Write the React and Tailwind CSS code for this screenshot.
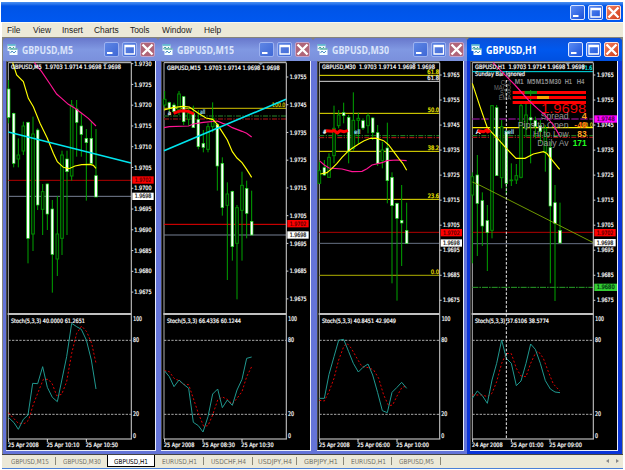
import clsx from 'clsx';

const MENU = [
  ['File', 'w-[26px]'],
  ['View', 'w-[29px]'],
  ['Insert', 'w-[32px]'],
  ['Charts', 'w-[36px]'],
  ['Tools', 'w-[32px]'],
  ['Window', 'w-[42px]'],
  ['Help', 'w-[30px]'],
];

const TABS = [
  ['GBPUSD,M15', 'w-[53px]', 38],
  ['GBPUSD,M30', 'w-[51px]', 38],
  ['GBPUSD,H1', 'w-[48px]', 34],
  ['EURUSD,H1', 'w-[49px]', 35],
  ['USDCHF,H4', 'w-[49px]', 35],
  ['USDJPY,H4', 'w-[44px]', 34],
  ['GBPJPY,H1', 'w-[47px]', 34],
  ['EURUSD,H1', 'w-[48px]', 35],
  ['GBPUSD,M5', 'w-[49px]', 35],
];

// candles: [x, high, low, body top, body bottom, filled]
const CHARTS = [
  {
    title: 'GBPUSD,M5',
    titleWidth: 51,
    width: 'w-[155px]',
    pad: 'pl-[3px] pr-[2px]',
    view: [18, 149],
    left: 25,
    axis: 394,
    header: [33, 330, 22],
    marker: 316,
    scale: { x: 403, w: 52, first: 11, step: 62.3, top: 19730, by: 5, count: 12 },
    dates: [[24, 92, '25 Apr 2008'], [140, 98, '25 Apr 10:10'], [257, 97, '25 Apr 10:50']],
    stoch: 'Stoch(5,3,3) 40.0000 61.2651',
    candles: [
      [26, 60, 190, 87, 172, 1], [41, 158, 322, 160, 310, 1], [55, 235, 322, 285, 297, 0],
      [70, 185, 285, 198, 273, 0], [84, 185, 610, 187, 535, 1], [99, 170, 573, 222, 522, 0],
      [113, 205, 450, 210, 435, 1], [128, 372, 525, 395, 448, 0], [142, 370, 510, 372, 462, 1],
      [157, 420, 698, 447, 583, 1], [172, 408, 648, 522, 597, 0], [186, 272, 585, 285, 535, 0],
      [201, 272, 525, 297, 335, 1], [215, 120, 362, 135, 348, 0], [230, 120, 290, 147, 187, 1],
      [244, 160, 290, 198, 223, 1], [259, 207, 422, 235, 248, 1], [274, 183, 315, 235, 310, 1],
      [288, 207, 411, 347, 411, 1],
    ],
    hlines: [[361, '#b00000'], [409, '#778094']],
    lines: [
      ['#ffff00', '38,8 50,45 70,65 85,115 100,140 120,190 142,235 160,280 172,305 190,322 207,326 225,318 245,314 270,313 280,316 288,325'],
      ['#ff1493', '103,8 125,35 150,72 170,102 185,115 205,133 225,145 245,160 265,175 288,198'],
      ['#00e5ee', '25,216 393,309', 4.5],
    ],
    tags: [[397, 360, '1.9702', '#ff0000', '#500'], [397, 409, '1.9698', '#ffffff', '#222']],
    labels: [],
    main: '25,322 42,338 55,358 70,328 84,315 98,220 113,221 128,170 142,232 157,262 172,275 200,140 215,40 230,50 244,58 259,90 274,150 288,237',
    signal: '25,308 55,340 75,340 86,330 100,283 115,245 130,208 145,208 157,222 170,257 185,253 200,215 215,130 230,70 245,48 260,65 275,100 288,160',
  },
  {
    title: 'GBPUSD,M15',
    titleWidth: 57,
    width: 'w-[155px]',
    pad: 'pl-[3px] pr-[2px]',
    view: [15, 149],
    left: 24,
    axis: 391,
    header: [33, 338, 23],
    marker: 314,
    scale: { x: 401, w: 51, first: 51, step: 83.2, top: 19755, by: 10, count: 9 },
    dates: [[24, 91, '25 Apr 2008'], [139, 98, '25 Apr 08:30'], [256, 97, '25 Apr 10:30']],
    stoch: 'Stoch(5,3,3) 66.4336 60.1244',
    candles: [
      [26, 93, 142, 118, 135, 0], [40, 125, 155, 128, 145, 1], [54, 128, 160, 135, 155, 1],
      [69, 93, 165, 102, 150, 0], [83, 108, 195, 110, 185, 1], [98, 145, 197, 160, 178, 0],
      [112, 137, 203, 160, 203, 1], [127, 150, 268, 178, 260, 1], [142, 210, 277, 250, 262, 1],
      [156, 190, 277, 200, 268, 0], [170, 127, 217, 175, 200, 0], [184, 190, 392, 193, 318, 1],
      [199, 292, 467, 310, 443, 1], [214, 367, 660, 402, 436, 0], [229, 392, 602, 394, 560, 1],
      [243, 435, 718, 443, 550, 0], [258, 335, 602, 376, 451, 0], [272, 362, 535, 385, 460, 1],
      [287, 392, 525, 484, 525, 1],
    ],
    hlines: [
      [145, '#a89c00', 4], [168, '#1d5c1d', 4, '15 4 4 4'], [177, '#7a1010', 4, '15 4 4 4'],
      [493, '#f00000'], [525, '#778094'],
    ],
    lines: [
      ['#ff1493', '24,203 40,200 98,198 112,192 142,187 184,183 200,190 214,194 229,203 258,214 272,220 287,231'],
      ['#ffff00', '24,150 50,143 80,139 100,141 127,160 150,174 170,178 184,193 200,218 214,240 229,275 243,294 258,308 272,328 287,352'],
      ['#00e5ee', '24,272 390,118', 5],
    ],
    scribble: 'M53 160 L68 154 L82 152 L97 154 L114 162',
    tags: [[394, 491, '1.9702', '#ff0000', '#500'], [394, 525, '1.9698', '#ffffff', '#222']],
    labels: [
      [348, 134, 40, '100.0', '#d8d000'],
      [35, 158, 10, 'a', '#fff'],
      [132, 157, 16, 'all', '#9de'],
    ],
    main: '25,182 40,200 54,230 69,210 83,223 98,235 112,337 127,347 141,366 156,320 170,252 185,237 199,293 214,270 229,286 243,240 258,208 272,145 287,141',
    signal: '25,182 40,185 54,205 69,212 83,223 98,224 112,265 127,310 143,349 156,347 170,315 185,270 199,261 214,268 229,282 243,265 258,245 272,200 287,170',
  },
  {
    title: 'GBPUSD,M30',
    titleWidth: 57,
    width: 'w-[154px]',
    pad: 'pl-[4px] pr-[3px]',
    view: [15, 146],
    left: 22,
    axis: 383,
    header: [30, 339, 21],
    marker: 306,
    scale: { x: 393, w: 50, first: 45, step: 75.1, top: 19765, by: 10, count: 10 },
    dates: [[21, 92, '25 Apr 2008'], [136, 98, '25 Apr 06:00'], [253, 98, '25 Apr 10:00']],
    stoch: 'Stoch(5,3,3) 40.8451 42.9049',
    candles: [
      [22, 300, 372, 332, 370, 0], [37, 300, 348, 323, 345, 1], [51, 280, 353, 292, 352, 0],
      [66, 137, 310, 205, 287, 0], [80, 150, 205, 165, 197, 0], [95, 128, 190, 158, 167, 1],
      [110, 165, 310, 172, 275, 1], [124, 97, 272, 181, 265, 0], [139, 158, 252, 175, 181, 0],
      [153, 175, 210, 182, 204, 1], [168, 160, 220, 167, 197, 0], [182, 172, 240, 174, 218, 1],
      [197, 195, 318, 218, 310, 1], [211, 245, 325, 270, 302, 0], [226, 188, 430, 264, 362, 1],
      [240, 337, 670, 352, 437, 1], [255, 428, 722, 430, 475, 1], [269, 375, 618, 481, 489, 1],
      [284, 428, 550, 511, 550, 1],
    ],
    hlines: [
      [46, '#f0e800'], [64, '#d8d8d8'], [160, '#f0e800'], [274, '#f0e800'], [418, '#f0e800'],
      [646, '#8c8c00', 4], [227, '#229022', 3, '15 4 4 4'], [233, '#c01818', 3, '15 4 4 4'],
      [517, '#b00000'], [550, '#667084'],
    ],
    lines: [
      ['#ff1493', '22,302 37,315 51,324 90,327 120,335 150,334 165,326 180,315 210,308 225,302 255,300 284,302'],
      ['#ffff00', '25,342 45,338 60,325 75,310 90,292 110,272 125,262 140,252 155,243 175,235 195,235 215,242 230,255 245,275 260,295 272,310 284,331'],
    ],
    scribble: 'M42 212 L60 214 L66 211 L76 219 L84 212 L97 215 L108 212',
    tags: [[386, 518, '1.9702', '#ff0000', '#500'], [386, 549, '1.9698', '#ffffff', '#222']],
    labels: [
      [346, 37, 35, '61.8', '#f0e800'], [346, 55, 35, '61.8', '#eee'], [347, 150, 34, '50.0', '#f0e800'],
      [347, 264, 34, '38.2', '#f0e800'], [347, 408, 34, '23.6', '#f0e800'], [356, 637, 25, '0.0', '#e0d800'],
      [32, 216, 12, '#', '#fff'], [127, 215, 18, 'ell', '#9de'],
    ],
    main: '22,265 37,265 51,193 66,140 80,91 95,88 110,125 124,160 139,186 153,172 168,162 182,195 197,248 211,302 226,308 240,247 255,232 269,217 284,235',
    signal: '22,271 37,273 51,245 66,205 80,150 95,110 105,100 118,115 135,145 150,170 170,173 185,180 200,205 215,255 230,287 242,285 255,258 270,232 284,228',
  },
  {
    title: 'GBPUSD,H1',
    titleWidth: 51,
    active: true,
    width: 'w-[155px]',
    pad: 'pl-[3px] pr-[4px]',
    view: [15, 147],
    left: 22,
    axis: 385,
    header: [30, 329, 21],
    marker: 308,
    scale: { x: 396, w: 50, first: 45, step: 75.1, top: 19765, by: 10, count: 10 },
    dates: [[21, 92, '24 Apr 2008'], [137, 98, '25 Apr 01:00'], [253, 98, '25 Apr 09:00']],
    stoch: 'Stoch(5,3,3) 37.6106 38.5774',
    candles: [
      [22, 337, 610, 350, 405, 0], [37, 285, 588, 345, 430, 1], [52, 397, 558, 422, 498, 1],
      [67, 435, 633, 482, 518, 1], [81, 135, 535, 137, 511, 0], [95, 135, 347, 143, 347, 1],
      [110, 180, 385, 200, 353, 0], [124, 210, 405, 215, 370, 1], [139, 310, 378, 360, 361, 0],
      [154, 312, 372, 347, 360, 0], [168, 130, 355, 137, 352, 0], [183, 125, 232, 165, 205, 0],
      [197, 90, 310, 173, 180, 1], [211, 170, 235, 182, 200, 1], [226, 180, 250, 197, 215, 1],
      [241, 195, 335, 205, 275, 0], [256, 245, 670, 263, 438, 1], [270, 375, 723, 428, 490, 1],
      [285, 428, 551, 511, 549, 1],
    ],
    hlines: [
      [35, '#00e5ee'], [177, '#78107c', 4, '22 5'], [203, '#fff000', 4], [227, '#229022', 3, '15 4 4 4'],
      [232, '#c01818', 3, '15 4 4 4'], [517, '#b00000'], [551, '#667084'], [682, '#28a028', 3, '18 3 5 3'],
    ],
    lines: [
      ['#86b800', '22,366 45,376 385,548', 2.5],
      ['#ff1493', '84,8 110,35 150,75 190,120 220,148 240,165 265,195 284,227'],
      ['#ffff00', '22,70 45,140 67,203 100,238 124,265 153,295 180,295 205,282 235,275 245,280 265,305 284,328'],
    ],
    cursor: 124,
    scribble: 'M38 212 L56 215 L66 209 L68 216 L76 212',
    tags: [
      [388, 177, '1.9748', '#ff00ff', '#404', 68], [388, 518, '1.9702', '#ff0000', '#500'],
      [388, 548, '1.9698', '#ffffff', '#222'], [388, 682, '1.9680', '#32cd32', '#031', 68],
    ],
    labels: [
      [350, 25, 32, '71.6', '#00e5ee'], [342, 195, 41, '100.0', '#d8d000'], [30, 41, 150, 'Sunday Bar ignored', '#eee'],
      [32, 216, 14, 'A', '#fff'], [119, 215, 28, 'sell', '#9de'],
    ],
    panel: true,
    main: '22,265 37,243 52,257 67,280 81,210 95,160 110,90 124,145 139,160 154,227 168,213 183,160 197,102 211,118 226,160 241,212 256,237 270,246 285,248',
    signal: '22,255 52,255 67,260 81,250 95,215 110,160 124,130 139,131 154,175 168,198 183,200 197,160 211,130 220,124 235,145 250,185 265,222 285,243',
  },
];

function Label({ x, y, w, size = 19, fill = '#f4f4f4', bold, children }) {
  return (
    <text
      x={x}
      y={y + size * 0.36}
      fontSize={size}
      fill={fill}
      stroke={size < 20 ? fill : 'none'}
      strokeWidth="0.7"
      fontWeight={bold ? 700 : 400}
      textLength={w}
      lengthAdjust="spacingAndGlyphs"
      xmlSpace="preserve"
    >
      {children}
    </text>
  );
}

function Candle({ data }) {
  const [x, high, low, top, bottom, filled] = data;
  return (
    <g>
      <path d={`M${x} ${high}V${low}`} stroke="#00a400" strokeWidth="3" />
      <rect
        x={x - 4}
        y={top}
        width="8"
        height={Math.max(bottom - top, 2)}
        fill={filled ? '#ffffff' : '#001800'}
        stroke={filled ? '#20d820' : '#008c00'}
        strokeWidth={filled ? 2 : 3}
      />
    </g>
  );
}

function InfoPanel() {
  return (
    <g fontFamily='"Liberation Sans", Arial, sans-serif'>
      <Label x={107} y={67} w={31} size={20} fill="#707070">CCI</Label>
      <Label x={87} y={82} w={51} size={20} fill="#707070">MACD</Label>
      <Label x={105} y={97} w={33} size={20} fill="#707070">STR</Label>
      <Label x={101} y={112} w={37} size={20} fill="#707070">EMA</Label>
      {[['M1', 149, 27], ['M5', 186, 25], ['M15', 212, 38], ['M30', 252, 37], ['H1', 299, 22], ['H4', 335, 23]].map(([t, x, w]) => (
        <Label key={t} x={x} y={66} w={w} size={20} fill="#8c8c8c" bold>{t}</Label>
      ))}
      <rect x="143" y="93" width="220" height="9" fill="#ff0000" />
      <rect x="179" y="93" width="37" height="9" fill="#109010" />
      <rect x="143" y="108" width="220" height="9" fill="#ff0000" />
      <rect x="216" y="108" width="36" height="9" fill="#ffa500" />
      <rect x="143" y="123" width="220" height="9" fill="#ff0000" />
      <Label x={228} y={145} w={136} size={38} fill="#f00000">1.9698</Label>
      <Label x={227} y={169} w={84} size={25} fill="#949494">Spread</Label>
      <Label x={158} y={196} w={153} size={25} fill="#949494">Pips to Open</Label>
      <Label x={204} y={223} w={107} size={25} fill="#949494">Hi to Low</Label>
      <Label x={217} y={250} w={94} size={25} fill="#949494">Daily Av</Label>
      <Label x={350} y={169} w={15} size={25} fill="#ffa020" bold>4</Label>
      <Label x={328} y={196} w={37} size={25} fill="#ff7010" bold>-49</Label>
      <Label x={337} y={223} w={28} size={25} fill="#ffa020" bold>83</Label>
      <Label x={323} y={250} w={42} size={25} fill="#20ff20" bold>171</Label>
    </g>
  );
}

// chart space is three units per pixel
function Chart({ chart }) {
  const { view, left, axis, header, scale } = chart;
  const ticks = Array.from({ length: scale.count }, (_, i) => i).filter((i) => scale.first + i * scale.step < 730);

  return (
    <svg
      width={view[1]}
      height="389"
      viewBox={`${view[0]} 3 ${view[1] * 3} 1167`}
      className="block shrink-0 bg-black"
      fontFamily='"DejaVu Sans Condensed", "DejaVu Sans", sans-serif'
      fill="none"
    >
      <path d={`M${view[0]} 4H${axis}`} stroke="#777" strokeWidth="3" />
      <path d={`M${left} 8H${axis}`} stroke="#d0d0d0" strokeWidth="3" />
      <path d={`M${left} 8V1137`} stroke="#b0b0b0" strokeWidth="3" />
      <path d={`M${view[0] + 1} 4V1170`} stroke="#555" strokeWidth="3" />
      <path d={`M${chart.marker - 8} 8h16l-8 8z`} fill="#778899" />

      {chart.hlines.map(([y, color, width = 3, dash]) => (
        <path key={y} d={`M${left} ${y}H${axis}`} stroke={color} strokeWidth={width} strokeDasharray={dash} />
      ))}
      {chart.candles.map((c) => <Candle key={c[0]} data={c} />)}
      {chart.labels.map(([x, y, w, text, color]) => (
        <Label key={`${x}-${y}`} x={x} y={y} w={w} size={18} fill={color}>{text}</Label>
      ))}
      {chart.panel && <InfoPanel />}
      {chart.lines.map(([color, points, width = 3.5]) => (
        <polyline key={color} points={points} stroke={color} strokeWidth={width} />
      ))}
      {chart.scribble && <path d={chart.scribble} stroke="#ff0000" strokeWidth="9" strokeLinejoin="round" />}

      {/* Stochastic pane */}
      <g transform="translate(0 750)">
        <path d={`M${left} 91H${axis}M${left} 313H${axis}`} stroke="#a8a8a8" strokeWidth="3" strokeDasharray="7 4" />
        <polyline points={chart.signal} stroke="#e00000" strokeWidth="3" strokeDasharray="6 6" />
        <polyline points={chart.main} stroke="#20988f" strokeWidth="3" />
        <path d={`M${left - 2} 12H${axis}`} stroke="#c0c0c0" strokeWidth="6" />
        <path d={`M${left} 387H${axis + 2}`} stroke="#e0e0e0" strokeWidth="3" />
        <Label x={header[0]} y={32} w={222} size={18}>{chart.stoch}</Label>
        <Label x={axis + 6} y={27} w={26}>100</Label>
        <Label x={axis + 5} y={89} w={18}>80</Label>
        <Label x={axis + 5} y={312} w={18}>20</Label>
        <Label x={axis + 5} y={377} w={9}>0</Label>
        {chart.dates.map(([x, w, text]) => (
          <g key={text}>
            <path d={`M${x + 2} 387v9`} stroke="#e0e0e0" strokeWidth="3" />
            <Label x={x} y={406} w={w} size={18}>{text}</Label>
          </g>
        ))}
      </g>

      {chart.cursor && (
        <path d={`M${chart.cursor} 60V1137`} stroke="#f0f0f0" strokeWidth="3" strokeDasharray="8 5" />
      )}

      {/* Price scale */}
      <path d={`M${axis} 8V1137`} stroke="#b8b8b8" strokeWidth="3.5" />
      {ticks.map((i) => {
        const y = scale.first + i * scale.step;
        return (
          <g key={i}>
            <path d={`M${axis} ${y}h6`} stroke="#d0d0d0" strokeWidth="3" />
            <Label x={scale.x} y={y} w={scale.w} size={18}>
              {((scale.top - i * scale.by) / 10000).toFixed(4)}
            </Label>
          </g>
        );
      })}
      {chart.tags.map(([x, y, text, bg, color, width = 64]) => (
        <g key={text}>
          <rect x={x} y={y - 11} width={width} height="22" fill={bg} />
          <Label x={x + 7} y={y} w={width - 14} size={18} fill={color}>{text}</Label>
        </g>
      ))}
      <Label x={header[0]} y={header[2]} w={header[1]} size={18}>
        {`${chart.title}\u00a0 1.9703 1.9714 1.9698 1.9698`}
      </Label>
    </svg>
  );
}

function WindowButtons({ active }) {
  const blue = active
    ? 'bg-linear-to-br from-[#5b8cf4] to-[#1a4fd8] border-[#dbe6ff]'
    : 'bg-linear-to-br from-[#5f86e4] to-[#3f68d6] border-[#9db2f0]';
  return (
    <div className="flex gap-[3px]">
      <span className={clsx('size-[15px] rounded-[2px] border', blue)}>
        <svg viewBox="0 0 13 13" className="block"><path d="M2 10h5.500" stroke="#fff" strokeWidth="2" /></svg>
      </span>
      <span className={clsx('size-[15px] rounded-[2px] border', blue)}>
        <svg viewBox="0 0 13 13" className="block" fill="none">
          <path d="M2 2.500h9.500v8.500H2zM2 3.500h9.500" stroke="#fff" strokeWidth="1.300" />
        </svg>
      </span>
      <span
        className={clsx(
          'size-[15px] rounded-[2px] border',
          active ? 'bg-linear-to-br from-[#f08060] to-[#d03810] border-[#ffe0d8]' : 'bg-[#b06578] border-[#c3a4cc]'
        )}
      >
        <svg viewBox="0 0 13 13" className="block"><path d="M1.500 1.500l10 10M11.500 1.500l-10 10" stroke="#fff" strokeWidth="2.400" /></svg>
      </span>
    </div>
  );
}

function ChartIcon() {
  return (
    <svg width="11" height="12" viewBox="0 0 11 12" className="shrink-0">
      <rect x="0.500" y="0.500" width="8" height="6.500" fill="#e8f4f4" />
      <path d="M0.500 1h8" stroke="#4ab0c8" strokeWidth="1.500" />
      <path d="M1.500 5l1.500-2 2 2 2-2" stroke="#3090a0" fill="none" strokeWidth="0.900" />
      <rect x="2.500" y="4.500" width="8" height="6.500" fill="#f4ffff" />
      <path d="M2.500 5h8" stroke="#3aa090" strokeWidth="1.200" />
      <path d="M3.500 9l1.500-2 2 2 2-2" stroke="#3a80c0" fill="none" strokeWidth="0.900" />
    </svg>
  );
}

function ChartWindow({ chart }) {
  const { active } = chart;
  return (
    <section
      className={clsx(
        'h-[416px] shrink-0 flex flex-col rounded-t-[4px]',
        chart.width,
        active ? 'bg-[#0a34d8]' : 'bg-[#6474d8]'
      )}
    >
      <div
        className={clsx(
          'h-[23px] shrink-0 flex items-center justify-between rounded-t-[4px] pl-[4px] pr-[3px]',
          active
            ? 'bg-linear-to-b from-[#0a50d8] via-[#0058ee] to-[#0050e0]'
            : 'bg-linear-to-b from-[#6878cc] via-[#8098e2] to-[#7a90dc]'
        )}
      >
        <div className="flex items-center gap-[4px]">
          <ChartIcon />
          <svg
            width={chart.titleWidth}
            height="14"
            className={active ? 'text-white' : 'text-[#dbe4fa]'}
            fontFamily='"Open Sans", sans-serif'
          >
            <text
              y="11"
              fontSize="10.500"
              fontWeight="700"
              fill="currentColor"
              textLength={chart.titleWidth}
              lengthAdjust="spacingAndGlyphs"
            >
              {chart.title}
            </text>
          </svg>
        </div>
        <WindowButtons active={active} />
      </div>
      <div className={clsx('flex', chart.pad)}>
        <div className="border-r border-b border-[#e8ecf8]">
          <Chart chart={chart} />
        </div>
      </div>
    </section>
  );
}

export default function App() {
  return (
    <div className="w-[625px] h-[470px] overflow-hidden bg-white pt-[2px] pl-[2px] pr-[2px] flex flex-col font-['Liberation_Sans',Arial,sans-serif]">
      {/* Title bar */}
      <header className="h-[20px] -ml-px shrink-0 flex items-center justify-end pr-[2px] bg-linear-to-b from-[#4a90f0] via-[#0054e6] via-20% to-[#0058f0]">
        <WindowButtons active />
      </header>

      {/* Menu */}
      <nav className="h-[15px] shrink-0 flex items-center pl-[5px] bg-[#ece9d8] border-t border-[#f8f8f0] text-[8.4px] leading-none text-[#222]">
        {MENU.map(([name, width]) => (
          <span key={name} className={width}>{name}</span>
        ))}
      </nav>

      <main className="h-[417px] shrink-0 flex border-t border-[#85847c] bg-[#85847c] pl-px">
        {CHARTS.map((chart) => <ChartWindow key={chart.title} chart={chart} />)}
      </main>

      {/* Tabs */}
      <footer className="h-[14px] shrink-0 flex items-start bg-[#ece9d8] border-t border-[#444] pl-px">
        {TABS.map(([name, width, length], i) => (
          <div
            key={i}
            className={clsx(
              'h-[12px] flex items-center justify-center shrink-0',
              width,
              i === 2 ? 'bg-white border-x border-b border-black text-black' : 'text-[#77756a]',
              i !== 1 && i !== 2 && 'bg-linear-to-b from-[#8a8878] to-[#8a8878] bg-[length:1px_8px] bg-right bg-no-repeat'
            )}
          >
            <svg width={length} height="10" viewBox={`0 0 ${length} 10`} fontFamily='"DejaVu Sans Condensed", sans-serif'>
              <text x="0" y="7.500" fontSize="6.800" fill="currentColor" textLength={length} lengthAdjust="spacingAndGlyphs">{name}</text>
            </svg>
          </div>
        ))}
        <div className="ml-auto mr-[4px] h-[11px] flex items-center gap-[7px]">
          <svg width="3" height="4" viewBox="0 0 3 4"><path d="M3 0v4L0 2z" fill="#888" /></svg>
          <svg width="3" height="4" viewBox="0 0 3 4"><path d="M0 0v4l3-2z" fill="#888" /></svg>
        </div>
      </footer>
      <div className="h-px shrink-0 bg-[#4a80d8]" />
    </div>
  );
}
